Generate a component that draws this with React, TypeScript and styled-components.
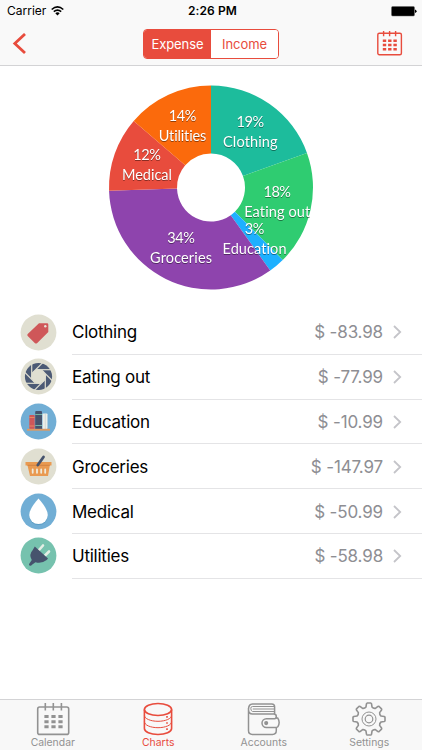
import React from "react";
import styled, { createGlobalStyle } from "styled-components";

const RED = "#e84c3d";
const GRAY = "#929292";

const GlobalStyle = createGlobalStyle`
  * { box-sizing: border-box; }
  body { margin: 0; background: #fff; font-family: Inter, "Liberation Sans", sans-serif; color: #000; }
  svg { display: block; }
`;

const Screen = styled.div`
  width: 422px;
  height: 750px;
  display: flex;
  flex-direction: column;
  background: #fff;
  overflow: hidden;
`;

const Header = styled.header`
  flex: none;
  height: 66px;
  background: #f9f9f9;
  border-bottom: 1px solid #d3d3d5;
`;

const StatusBar = styled.div`
  height: 22px;
  padding: 0 5px 0 7px;
  display: grid;
  grid-template-columns: 1fr auto 1fr;
  align-items: center;
  font-size: 12px;
  line-height: 22px;
`;

const Carrier = styled.div`
  display: flex;
  align-items: center;
  gap: 5px;
  letter-spacing: 0;
`;

const Clock = styled.div`
  font-weight: 600;
  letter-spacing: 0.1px;
  padding-left: 1px;
`;

const BatteryCell = styled.div`
  display: flex;
  justify-content: flex-end;
`;

const NavBar = styled.div`
  height: 43px;
  padding: 0 19px 0 12px;
  display: grid;
  grid-template-columns: 1fr 136px 1fr;
  align-items: center;
`;

const NavButton = styled.button<{ $end?: boolean }>`
  border: 0;
  padding: 0;
  background: none;
  justify-self: ${(p) => (p.$end ? "end" : "start")};
`;

const Segments = styled.div`
  display: flex;
  height: 30px;
  margin: 0 -4px 0 3.5px;
  width: 136px;
  border: 1px solid ${RED};
  border-radius: 4px;
  overflow: hidden;
`;

const Segment = styled.button<{ $active?: boolean }>`
  flex: 1;
  border: 0;
  padding: 0;
  font: 400 13px/28px Inter, sans-serif;
  letter-spacing: -0.05px;
  color: ${(p) => (p.$active ? "#fff" : RED)};
  background: ${(p) => (p.$active ? RED : "#fff")};
`;

const ChartArea = styled.section`
  flex: none;
  height: 244px;
  display: flex;
  justify-content: center;
  padding-top: 14px;
`;

const ChartLabel = styled.text`
  fill: #fff;
  font: 400 14.5px Lato, sans-serif;
  font-variant-ligatures: none;
  text-anchor: middle;
  filter: drop-shadow(0.5px 1px 0.7px rgba(0, 0, 0, 0.4));
`;

const List = styled.ul`
  flex: 1;
  margin: 0;
  padding: 0;
  list-style: none;
`;

const Row = styled.li`
  height: 44.8px;
  display: flex;
  padding-left: 20px;
`;

const IconCell = styled.div`
  width: 52px;
  padding-top: 3.5px;
`;

const RowBody = styled.div`
  flex: 1;
  display: flex;
  align-items: center;
  padding: 1px 20px 0 0;
  border-bottom: 1px solid #e4e4e6;
  font-size: 17px;
`;

const Name = styled.span`
  flex: 1;
  letter-spacing: -0.25px;
`;

const Amount = styled.span`
  color: #8e8e93;
  margin-right: 10px;
  letter-spacing: -0.15px;
`;

const TabBar = styled.nav`
  flex: none;
  height: 51px;
  display: grid;
  grid-template-columns: repeat(4, 1fr);
  background: #f8f8f8;
  border-top: 1px solid #d3d3d5;
`;

const Tab = styled.button<{ $active?: boolean }>`
  border: 0;
  background: none;
  padding: 2px 0 0;
  display: flex;
  flex-direction: column;
  align-items: center;
  color: ${(p) => (p.$active ? RED : GRAY)};
  font: 400 10.4px/14px Inter, sans-serif;
  letter-spacing: 0;
`;

const CX = 105;
const CY = 107.5;

const slices = [
  { name: "Clothing", pct: 19, value: 83.98, color: "#1dbc9c", x: 144.3, y: 47, w: 54.5 },
  { name: "Eating out", pct: 18, value: 77.99, color: "#2fcc71", x: 171.2, y: 117, w: 66 },
  { name: "Education", pct: 3, value: 10.99, color: "#1eb0ff", x: 148.5, y: 154, w: 64 },
  { name: "Groceries", pct: 34, value: 147.97, color: "#8e44ad", x: 75, y: 163, w: 62 },
  { name: "Medical", pct: 12, value: 50.99, color: "#e84c3d", x: 41, y: 80, w: 50 },
  { name: "Utilities", pct: 14, value: 58.98, color: "#fb6a0c", x: 76.5, y: 41, w: 47.5 },
];

const polar = (r: number, a: number) =>
  `${(CX + r * Math.sin(a)).toFixed(2)} ${(CY - r * Math.cos(a)).toFixed(2)}`;

const DonutChart = () => {
  const total = slices.reduce((s, d) => s + d.value, 0);
  let start = 0;
  const arcs = slices.map((s) => {
    const a = start;
    const b = start + (s.value / total) * Math.PI * 2;
    start = b;
    return (
      <path
        key={s.name}
        fill={s.color}
        d={`M${polar(34, a)}L${polar(102, a)}A102 102 0 0 1 ${polar(102, b)}L${polar(34, b)}A34 34 0 0 0 ${polar(34, a)}Z`}
      />
    );
  });
  return (
    <svg width="210" height="214" viewBox="0 0 210 214">
      {arcs}
      {slices.map((s) => (
        <g key={s.name}>
          <ChartLabel x={s.x} y={s.y} textLength={s.pct > 9 ? 27.5 : 19.5}>
            {`${s.pct}%`}
          </ChartLabel>
          <ChartLabel x={s.x} y={s.y + 20} textLength={s.w}>
            {s.name}
          </ChartLabel>
        </g>
      ))}
    </svg>
  );
};

const Disc = ({ color, children }: { color: string; children: React.ReactNode }) => (
  <svg width="37" height="37" viewBox="0 0 37 37">
    <circle cx="18.5" cy="18.5" r="17.9" fill={color} />
    {children}
  </svg>
);

const TagIcon = () => (
  <Disc color="#e0dfd1">
    <path d="M19 9.2H27Q28.3 9.2 28.3 10.5V18L17 29.2Q16 30 15 29.2L7.7 21.9Q6.8 21 7.7 20.1Z" fill="#cf5759" />
    <circle cx="25.3" cy="12.2" r="1.2" fill="#e8e3d6" />
  </Disc>
);

const ShutterIcon = () => (
  <Disc color="#e0dfd1">
    <circle cx="18.5" cy="18.5" r="13.6" fill="#4c5a75" />
    <circle cx="18.5" cy="18.5" r="7.2" fill="#e0dfd1" />
    {[0, 45, 90, 135, 180, 225, 270, 315].map((a) => (
      <path key={a} d="M16 11.7H32" transform={`rotate(${a} 18.5 18.5)`} stroke="#e0dfd1" strokeWidth="1.2" />
    ))}
  </Disc>
);

const BooksIcon = () => (
  <Disc color="#71aed5">
    <rect x="9.3" y="12" width="5.4" height="14" rx="0.8" fill="#cf5759" />
    <path d="M9.3 14.5H14.7M9.3 23H14.7" stroke="#e58a62" strokeWidth="1.2" />
    <path d="M15.2 9Q15.2 8 16.2 8H21Q22 8 22 9V26H15.2Z" fill="#46536d" />
    <path d="M15.2 11.5H22M15.2 22.5H22" stroke="#72b4a5" strokeWidth="1.2" />
    <rect x="22.5" y="10.5" width="5" height="15.5" rx="0.8" fill="#eeeee8" />
    <path d="M25.3 11V26" stroke="#cdd4d2" strokeWidth="0.8" />
    <rect x="7" y="25.8" width="23" height="1.9" fill="#dc9b64" />
  </Disc>
);

const BasketIcon = () => (
  <Disc color="#e0dfd1">
    <path d="M5.5 14H31.5V17.4H29.8L28 28H10L7.5 17.4H5.5Z" fill="#e99a51" />
    <path d="M7.5 17.3H29.8" stroke="#d18343" strokeWidth="1" />
    <path d="M12.7 21.5V24.8M17 21.5V24.8M21.2 21.5V24.8M25.2 21.5V24.8" stroke="#f0eada" strokeWidth="1.8" strokeLinecap="round" />
    <path d="M17.8 17L23.5 9" stroke="#46536d" strokeWidth="2.8" strokeLinecap="round" />
  </Disc>
);

const DropIcon = () => (
  <Disc color="#71aed5">
    <path d="M18.5 6.8Q27.8 17 27.8 23A9.3 9.1 0 0 1 9.2 23Q9.2 17 18.5 6.8Z" fill="#4e91b9" opacity="0.6" />
    <path d="M18.5 5.5Q27.8 16 27.8 22A9.3 9.1 0 0 1 9.2 22Q9.2 16 18.5 5.5Z" fill="#fff" />
  </Disc>
);

const PlugIcon = () => (
  <Disc color="#76c2ae">
    <path d="M19 13L23 8.5M25 18.5L29 14.5" stroke="#e4eee5" strokeWidth="2.6" strokeLinecap="round" />
    <path d="M14.8 9.5L28 21.5L26.7 23Q21.5 27 15.5 25.2L12 27.8Q11 29.3 9.4 28.5Q8.4 27.2 9.6 26.2L11.8 23Q8.5 17.5 12.6 13.2Z" fill="#46536d" />
  </Disc>
);

const rows = [
  { name: "Clothing", amount: "$ -83.98", Icon: TagIcon },
  { name: "Eating out", amount: "$ -77.99", Icon: ShutterIcon },
  { name: "Education", amount: "$ -10.99", Icon: BooksIcon },
  { name: "Groceries", amount: "$ -147.97", Icon: BasketIcon },
  { name: "Medical", amount: "$ -50.99", Icon: DropIcon },
  { name: "Utilities", amount: "$ -58.98", Icon: PlugIcon },
];

const CalendarIcon = () => (
  <svg width="34" height="34" viewBox="0 0 34 34" fill="none" stroke="currentColor" strokeWidth="1.6">
    <rect x="1.7" y="5" width="31" height="27.4" rx="2" />
    <path d="M9.3 1V8.5M17.3 1V8.5M25.4 1V8.5" />
    <path d="M8.4 14.6H26.6M8.4 19.7H26.6M8.4 24.8H26.6" strokeWidth="3" strokeDasharray="4.2 2.8" />
  </svg>
);

const DatabaseIcon = () => (
  <svg width="34" height="34" viewBox="0 0 34 34" fill="none" stroke="currentColor" strokeWidth="1.6">
    <ellipse cx="17" cy="7.5" rx="13.6" ry="6" />
    <path d="M3.4 7.5V26.5C3.4 29.8 9.4 32.5 17 32.5S30.6 29.8 30.6 26.5V7.5" />
    <path d="M3.4 13.3C3.4 16.6 9.4 19.3 17 19.3S30.6 16.6 30.6 13.3M3.4 19.7C3.4 23 9.4 25.7 17 25.7S30.6 23 30.6 19.7" strokeWidth="1" />
    <path d="M25.2 14.8H26.8M25.2 21H26.8M25.2 27.2H26.8" strokeWidth="1.7" />
  </svg>
);

const WalletIcon = () => (
  <svg width="34" height="34" viewBox="0 0 34 34" fill="none" stroke="currentColor" strokeWidth="1.5">
    <path d="M1.5 6V28.5Q1.5 32.4 5.4 32.4H25.5Q29.3 32.4 29.3 28.5V25M29.3 16.5V14.5Q29.3 12 26.8 12H5.5Q1.5 12 1.5 7.5Q1.5 2 5.5 2H24.8Q27.6 2 27.6 4.8V12" />
    <path d="M27 4.5H5.5Q3.8 4.5 3.8 6.3M27 7H5.8M27 9.5H5.5Q3.8 9 3.8 6.3" strokeWidth="1" />
    <path d="M29.3 15.6L30.8 16.2Q33.5 20.5 30.8 24.8Q30 25.5 28.2 25.5H19.4A4.4 4.4 0 0 1 19.4 16.7H27.5Q29.3 16.7 29.3 14.7" />
    <circle cx="19.2" cy="21.1" r="1.3" fill="currentColor" />
  </svg>
);

const gearPath = Array.from({ length: 8 }, (_, i) => {
  const point = (r: number, deg: number) => {
    const a = ((i * 45 + deg) * Math.PI) / 180;
    return `${(17 + r * Math.sin(a)).toFixed(2)} ${(17 - r * Math.cos(a)).toFixed(2)}`;
  };
  return `${i ? "L" : "M"}${point(12.4, -14)}L${point(15.4, -9.5)}Q${point(16.1, -8)} ${point(16.1, -6)}L${point(16.1, 6)}Q${point(16.1, 8)} ${point(15.4, 9.5)}L${point(12.4, 14)}Q${point(11.2, 22.5)} ${point(12.4, 31)}`;
}).join("") + "Z";

const GearIcon = () => (
  <svg width="34" height="34" viewBox="0 0 34 34" fill="none" stroke="currentColor" strokeWidth="1.6" strokeLinejoin="round">
    <path d={gearPath} />
    <circle cx="17" cy="17" r="7" strokeWidth="1" />
    <circle cx="17" cy="17" r="3.8" strokeWidth="1.2" />
  </svg>
);

const App = () => (
  <Screen>
    <GlobalStyle />
    <Header>
      <StatusBar>
        <Carrier>
          Carrier
          <svg width="13" height="10" viewBox="0 0 13 10" fill="none" stroke="#000" strokeWidth="1.6">
            <path d="M0.7 3.5Q6.5 -1.7 12.3 3.5M2.8 5.7Q6.5 2.4 10.2 5.7" />
            <path d="M4.3 7.2Q6.5 5.4 8.7 7.2L6.5 9.6Z" fill="#000" stroke="none" />
          </svg>
        </Carrier>
        <Clock>2:26 PM</Clock>
        <BatteryCell>
          <svg width="26" height="11" viewBox="0 0 26 11">
            <rect x="0.5" y="0.5" width="23" height="9.5" rx="1.2" fill="#000" stroke="#666" strokeWidth="0.5" />
            <path d="M24 3.6Q25.6 4 25.6 5.3T24 7Z" />
          </svg>
        </BatteryCell>
      </StatusBar>
      <NavBar>
        <NavButton aria-label="Back">
          <svg width="14" height="22" viewBox="0 0 14 22" fill="none" stroke={RED} strokeWidth="2.8">
            <path d="M13 1L2.8 10.5L13 20" />
          </svg>
        </NavButton>
        <Segments>
          <Segment $active>Expense</Segment>
          <Segment>Income</Segment>
        </Segments>
        <NavButton $end aria-label="Pick dates">
          <svg width="26" height="26" viewBox="0 0 26 26" fill="none" stroke={RED} strokeWidth="1.4">
            <rect x="0.8" y="2.2" width="23.6" height="21.6" rx="1.5" />
            <path d="M6.6 0V5.2M12.6 0V5.2M18.6 0V5.2" />
            <path d="M5.8 9.8H19.8M5.8 14H19.8M5.8 18.2H19.8" strokeWidth="2.4" strokeDasharray="3.4 1.9" />
          </svg>
        </NavButton>
      </NavBar>
    </Header>
    <ChartArea>
      <DonutChart />
    </ChartArea>
    <List>
      {rows.map(({ name, amount, Icon }) => (
        <Row key={name}>
          <IconCell>
            <Icon />
          </IconCell>
          <RowBody>
            <Name>{name}</Name>
            <Amount>{amount}</Amount>
            <svg width="9" height="14" viewBox="0 0 9 14" fill="none" stroke="#c4c4c9" strokeWidth="1.8">
              <path d="M1 1L7.2 7L1 13" />
            </svg>
          </RowBody>
        </Row>
      ))}
    </List>
    <TabBar>
      <Tab>
        <CalendarIcon />
        Calendar
      </Tab>
      <Tab $active>
        <DatabaseIcon />
        Charts
      </Tab>
      <Tab>
        <WalletIcon />
        Accounts
      </Tab>
      <Tab>
        <GearIcon />
        Settings
      </Tab>
    </TabBar>
  </Screen>
);

export default App;
